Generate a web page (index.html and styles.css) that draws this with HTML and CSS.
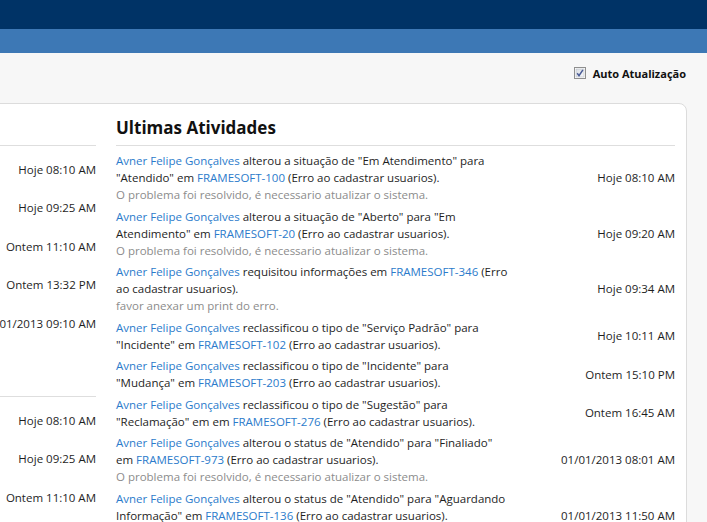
FILE: index.html
```html
<!DOCTYPE html>
<html lang="pt-BR">
<head>
<meta charset="utf-8">
<title>Ultimas Atividades</title>
<link rel="stylesheet" href="styles.css">
</head>
<body>
<div class="topbar"></div>
<div class="navbar"></div>
<div class="toolbar">
  <label class="auto">
    <svg class="check" width="12" height="12" viewBox="0 0 12 12">
      <defs>
        <linearGradient id="cbg" x1="0" y1="0" x2="1" y2="1">
          <stop offset="0" stop-color="#d9dde3"/>
          <stop offset="1" stop-color="#f7f8fa"/>
        </linearGradient>
      </defs>
      <rect x="0.5" y="0.5" width="11" height="11" fill="#fff" stroke="#8f8f8f"/>
      <rect x="2" y="2" width="8" height="8" fill="url(#cbg)" stroke="#b7bcc4" stroke-width="0.6"/>
      <path d="M3.2 6.2 L5 8.6 L8.9 2.8" fill="none" stroke="#4a5b96" stroke-width="1.5"/>
    </svg>
    Auto Atualização
  </label>
</div>
<div class="card">
  <section class="col col-left">
    <div class="panel">
      <div class="panel-head"></div>
      <ul class="feed">
        <li class="slot"><span class="when">Hoje 08:10 AM</span></li>
        <li class="slot"><span class="when">Hoje 09:25 AM</span></li>
        <li class="slot"><span class="when">Ontem 11:10 AM</span></li>
        <li class="slot"><span class="when">Ontem 13:32 PM</span></li>
        <li class="slot"><span class="when">01/01/2013 09:10 AM</span></li>
      </ul>
    </div>
    <div class="panel panel-next">
      <div class="panel-head"></div>
      <ul class="feed">
        <li class="slot"><span class="when">Hoje 08:10 AM</span></li>
        <li class="slot"><span class="when">Hoje 09:25 AM</span></li>
        <li class="slot"><span class="when">Ontem 11:10 AM</span></li>
        <li class="slot"><span class="when">Ontem 13:32 PM</span></li>
      </ul>
    </div>
  </section>
  <section class="col col-right">
    <h2 class="panel-head">Ultimas Atividades</h2>
    <ul class="feed">
      <li class="item">
        <div class="desc"><a href="#">Avner Felipe Gonçalves</a> alterou a situação de "Em Atendimento" para<br>"Atendido" em <a href="#">FRAMESOFT-100</a> (Erro ao cadastrar usuarios).<br><span class="note">O problema foi resolvido, é necessario atualizar o sistema.</span></div>
        <span class="when">Hoje 08:10 AM</span>
      </li>
      <li class="item">
        <div class="desc"><a href="#">Avner Felipe Gonçalves</a> alterou a situação de "Aberto" para "Em<br>Atendimento" em <a href="#">FRAMESOFT-20</a> (Erro ao cadastrar usuarios).<br><span class="note">O problema foi resolvido, é necessario atualizar o sistema.</span></div>
        <span class="when">Hoje 09:20 AM</span>
      </li>
      <li class="item">
        <div class="desc"><a href="#">Avner Felipe Gonçalves</a> requisitou informações em <a href="#">FRAMESOFT-346</a> (Erro<br>ao cadastrar usuarios).<br><span class="note">favor anexar um print do erro.</span></div>
        <span class="when">Hoje 09:34 AM</span>
      </li>
      <li class="item">
        <div class="desc"><a href="#">Avner Felipe Gonçalves</a> reclassificou o tipo de "Serviço Padrão" para<br>"Incidente" em <a href="#">FRAMESOFT-102</a> (Erro ao cadastrar usuarios).</div>
        <span class="when">Hoje 10:11 AM</span>
      </li>
      <li class="item">
        <div class="desc"><a href="#">Avner Felipe Gonçalves</a> reclassificou o tipo de "Incidente" para<br>"Mudança" em <a href="#">FRAMESOFT-203</a> (Erro ao cadastrar usuarios).</div>
        <span class="when">Ontem 15:10 PM</span>
      </li>
      <li class="item">
        <div class="desc"><a href="#">Avner Felipe Gonçalves</a> reclassificou o tipo de "Sugestão" para<br>"Reclamação" em em <a href="#">FRAMESOFT-276</a> (Erro ao cadastrar usuarios).</div>
        <span class="when">Ontem 16:45 AM</span>
      </li>
      <li class="item">
        <div class="desc"><a href="#">Avner Felipe Gonçalves</a> alterou o status de "Atendido" para "Finaliado"<br>em <a href="#">FRAMESOFT-973</a> (Erro ao cadastrar usuarios).<br><span class="note">O problema foi resolvido, é necessario atualizar o sistema.</span></div>
        <span class="when">01/01/2013 08:01 AM</span>
      </li>
      <li class="item">
        <div class="desc"><a href="#">Avner Felipe Gonçalves</a> alterou o status de "Atendido" para "Aguardando<br>Informação" em <a href="#">FRAMESOFT-136</a> (Erro ao cadastrar usuarios).<br><span class="note">O problema foi resolvido, é necessario atualizar o sistema.</span></div>
        <span class="when">01/01/2013 11:50 AM</span>
      </li>
    </ul>
  </section>
</div>
</body>
</html>
```

FILE: styles.css
```css
html, body {
  margin: 0;
  padding: 0;
}
body {
  background: #f7f7f7;
  font-family: "Open Sans", "Noto Sans", "DejaVu Sans", sans-serif;
  font-size: 11.5px;
  color: #1e1e1e;
  overflow: hidden;
}
.topbar {
  height: 29px;
  background: #003366;
}
.navbar {
  height: 24px;
  background: #3d78b5;
}
.toolbar {
  height: 40px;
  display: flex;
  align-items: center;
  justify-content: flex-end;
  padding-right: 21px;
}
.auto {
  display: flex;
  align-items: center;
  gap: 7px;
  font-weight: bold;
  font-size: 11px;
  color: #111;
}
.check {
  display: block;
}
.card {
  margin: 10px 20px 0 -300px;
  background: #fff;
  border: 1px solid #dcdcdc;
  border-radius: 8px;
  display: grid;
  grid-template-columns: 1fr 559px;
  column-gap: 20px;
  padding: 12px 11px 40px 20px;
  min-height: 500px;
}
.panel-head {
  margin: 0;
  height: 24px;
  font-size: 17px;
  line-height: 24px;
  font-weight: bold;
  color: #111;
  padding-bottom: 5px;
  border-bottom: 1px solid #dedede;
}
.feed {
  list-style: none;
  margin: 6px 0 0;
  padding: 0;
}
.item, .slot {
  display: flex;
  justify-content: space-between;
  align-items: center;
  line-height: 17px;
  margin-bottom: 4.5px;
}
.slot {
  height: 34px;
  justify-content: flex-end;
}
.panel-next {
  padding-top: 22.5px;
}
.desc {
  white-space: nowrap;
}
.desc a {
  color: #2b7bcb;
  text-decoration: none;
}
.note {
  color: #8c8c8c;
}
.when {
  white-space: nowrap;
  color: #1e1e1e;
}
```
